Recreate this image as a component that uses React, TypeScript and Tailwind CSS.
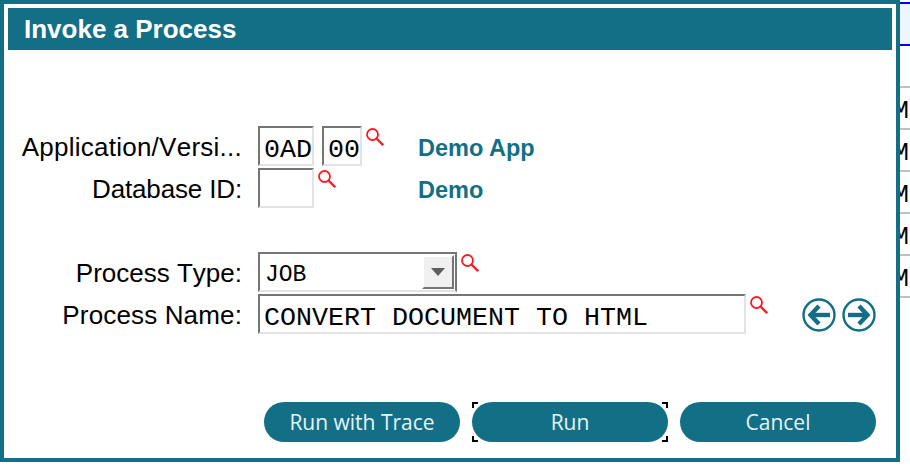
const MONO = "font-['Liberation_Mono',monospace]";
const inset = "border-2 border-t-[#767676] border-l-[#767676] border-r-[#e3e3e3] border-b-[#e3e3e3] bg-white";

function Lens() {
  return (
    <svg width="18" height="18" viewBox="0 0 18 18" className="shrink-0 self-start mt-[2px] ml-[4px]" fill="none">
      <circle cx="6.5" cy="6.5" r="5.5" stroke="#fa1c28" strokeWidth="1.8" />
      <path d="M10.5 10.5 L17.2 17.2" stroke="#fa1c28" strokeWidth="2.4" />
    </svg>
  );
}

function Arrow({ dir }: { dir: "l" | "r" }) {
  return (
    <svg width="34" height="34" viewBox="0 0 34 34" fill="none">
      <circle cx="17" cy="17" r="15.5" stroke="#136f86" strokeWidth="2.4" />
      <g transform={dir === "r" ? "rotate(180 17 17)" : undefined}>
        <path d="M28 17 H10" stroke="#136f86" strokeWidth="4.4" />
        <path d="M17 8 L8.5 17 L17 26" stroke="#136f86" strokeWidth="4.4" />
      </g>
    </svg>
  );
}

function Row({ label, tracking = "", children, className = "" }: { label: string; tracking?: string; children: React.ReactNode; className?: string }) {
  return (
    <div className={`flex h-[42px] ${className}`}>
      <div className={`w-[234px] text-right text-[26px] leading-[42px] text-black font-['Liberation_Sans',sans-serif] whitespace-nowrap [font-kerning:none] ${tracking}`}>
        {label}
      </div>
      <div className="ml-[16px] flex flex-1 items-start">{children}</div>
    </div>
  );
}

function Field({ value, w }: { value: string; w: string }) {
  return (
    <input
      readOnly
      value={value}
      className={`${w} h-[40px] ${inset} ${MONO} text-[26.67px] text-black pl-[4px] pr-0 pt-[8px] outline-none shrink-0`}
    />
  );
}

function Btn({ children, focus }: { children: string; focus?: boolean }) {
  return (
    <button className="relative w-[196px] h-[40px] rounded-[20px] bg-[#136f86] text-[#e8f3f6] text-[21px] font-['Open_Sans',sans-serif] leading-[38px]">
      {children}
      {focus && (
        <>
          <span className="absolute left-0 top-0 w-[6px] h-[6px] border-l-2 border-t-2 border-black" />
          <span className="absolute right-0 top-0 w-[6px] h-[6px] border-r-2 border-t-2 border-black" />
          <span className="absolute left-0 bottom-0 w-[6px] h-[6px] border-l-2 border-b-2 border-black" />
          <span className="absolute right-0 bottom-0 w-[6px] h-[6px] border-r-2 border-b-2 border-black" />
        </>
      )}
    </button>
  );
}

function Sliver() {
  return (
    <div className="w-[10px] h-[462px] overflow-hidden bg-white">
      <div className="mt-[2px] h-[44px] border-y-2 border-[#0000f0] bg-[#eef5fe]" />
      {[0, 1, 2, 3, 4, 5].map((i) => (
        <div
          key={i}
          className={`h-[42px] border-b-2 border-[#c0c0c0] overflow-hidden ${MONO} text-[26.67px] leading-[46px] text-black whitespace-nowrap`}
        >
          {i > 0 && <span className="-ml-[7px] block">M</span>}
        </div>
      ))}
    </div>
  );
}

export default function App() {
  return (
    <div className="flex w-[910px] h-[468px] bg-white overflow-hidden">
      <div className="w-[900px] h-[462px] border-4 border-[#136f86] bg-white p-[4px] flex flex-col shrink-0">
        <div className="h-[42px] bg-[#136f86] pl-[16px] text-white text-[26px] font-bold leading-[42px] font-['Liberation_Sans',sans-serif]">
          Invoke a Process
        </div>
        <div className="mt-[76px]">
          <Row label="Application/Versi..." tracking="tracking-[0.25px]">
            <Field value="0AD" w="w-[56px]" />
            <div className="w-[8px] shrink-0" />
            <Field value="00" w="w-[40px]" />
            <Lens />
            <span className="ml-[34px] text-[23.5px] font-bold leading-[44px] text-[#136f86] font-['Liberation_Sans',sans-serif]">Demo App</span>
          </Row>
          <Row label="Database ID:" tracking="tracking-[-0.15px]">
            <Field value="" w="w-[56px]" />
            <Lens />
            <span className="ml-[82px] text-[23.5px] font-bold leading-[44px] text-[#136f86] font-['Liberation_Sans',sans-serif]">Demo</span>
          </Row>
          <Row label="Process Type:" className="mt-[42px]">
            <div className={`w-[199px] h-[40px] border-2 border-[#767676] border-b-[#e3e3e3] bg-white flex shrink-0 ${MONO} text-[23px] text-black`}>
              <span className="flex-1 pl-[5px] leading-[42px]">JOB</span>
              <div className="w-[32px] m-[1px] border-2 border-t-white border-l-white border-r-[#767676] border-b-[#767676] bg-[#f0f0f0] flex items-center justify-center">
                <svg width="14" height="8" viewBox="0 0 14 8"><path d="M0 0 H14 L7 8 Z" fill="#5f5f5f" /></svg>
              </div>
            </div>
            <Lens />
          </Row>
          <Row label="Process Name:" tracking="tracking-[0.15px]">
            <Field value="CONVERT DOCUMENT TO HTML" w="w-[488px]" />
            <Lens />
            <div className="ml-[34px] mt-[4px] flex gap-[6px]">
              <Arrow dir="l" />
              <Arrow dir="r" />
            </div>
          </Row>
        </div>
        <div className="mt-[66px] ml-[256px] flex gap-[12px]">
          <Btn>Run with Trace</Btn>
          <Btn focus>Run</Btn>
          <Btn>Cancel</Btn>
        </div>
      </div>
      <Sliver />
    </div>
  );
}
